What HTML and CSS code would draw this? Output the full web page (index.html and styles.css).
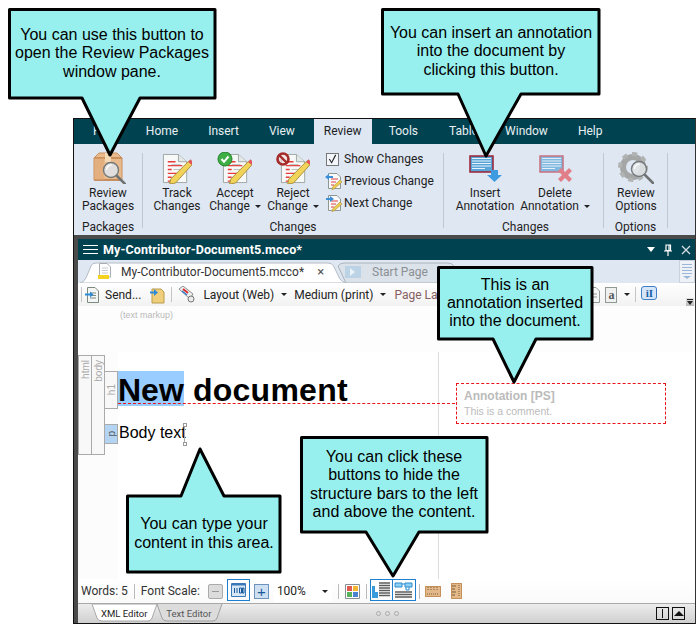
FILE: index.html
```html
<!DOCTYPE html>
<html lang="en">
<head>
<meta charset="utf-8">
<title>Review ribbon annotations</title>
<link rel="stylesheet" href="styles.css">
</head>
<body>
<svg width="0" height="0" class="defs">
  <defs>
    <symbol id="doc" viewBox="0 0 32 32">
      <path d="M2.500 1.500H18L26.500 9V30.500H2.500Z" fill="#f7f8f8" stroke="#9fa7a4"/>
      <path d="M18 1.500V9H26.500" fill="#e3e7e6" stroke="#9fa7a4"/>
      <path d="M7 9h8M7 13h15M7 17h4M7 21h12M7 25h4M7 29h6" stroke="#ea3a3a" stroke-width="1.400"/>
      <path d="M11 12h9M13 17h9M11 25h6" stroke="#b9c0bd" stroke-width="1"/>
      <path d="M29 8L33 11L15 31L9 32L10 27Z" fill="#f2d35a" stroke="#a88f3c" stroke-width="1"/>
      <path d="M28 9.500L32 12.500L33.500 9.500L30.500 6.500Z" fill="#e0555a"/>
    </symbol>
    <symbol id="smalldoc" viewBox="0 0 18 18">
      <path d="M3.500 1.500H12L15.500 5V16.500H3.500Z" fill="#f8f9fa" stroke="#8e9794"/>
      <path d="M6 7h7M6 10h5M6 13h3" stroke="#e04040"/>
      <path d="M15 8L17 10L9 17L7 17.500L7.500 15Z" fill="#eecb52" stroke="#a88f3c" stroke-width=".6"/>
    </symbol>
    <symbol id="annot" viewBox="0 0 30 26">
      <path d="M2 3h23v16H2Z" fill="#5aa5d8" stroke="currentColor" stroke-width="1.500"/>
      <path d="M4 5.500h19M4 8h19M4 10.500h19M4 13h19M4 15.500h13" stroke="#e6f2fb"/>
    </symbol>
    <symbol id="lens" viewBox="0 0 24 24">
      <path d="M14 14L23 23" stroke="#6f7272" stroke-width="2.500" stroke-linecap="round"/>
      <circle cx="9" cy="9" r="7.500" fill="#dfe3e6" fill-opacity=".9" stroke="#73787a" stroke-width="1.400"/>
      <path d="M4.500 9a5 5 0 0 1 5-5" stroke="#fff" fill="none" stroke-width="1.400"/>
    </symbol>
  </defs>
</svg>

<div class="window">
  <nav class="menubar">
    <span class="menu m-file">File</span>
    <span class="menu">Home</span>
    <span class="menu">Insert</span>
    <span class="menu">View</span>
    <span class="menu active">Review</span>
    <span class="menu">Tools</span>
    <span class="menu m-table">Table</span>
    <span class="menu">Window</span>
    <span class="menu">Help</span>
  </nav>

  <section class="ribbon">
    <div class="group g-packages">
      <div class="group-items">
        <div class="rbtn w-pack">
          <svg class="ico" width="36" height="32" viewBox="0 0 36 32">
            <path d="M4 6L9 1H27L32 6V28H4Z" fill="#e9bb8c" stroke="#c98f5d"/>
            <path d="M4 6H32M4 28H32" stroke="#c0824f" stroke-width="1.500"/>
            <path d="M15 1H21V10H15Z" fill="#f6d9b5"/>
            <path d="M4 6V28H14V6Z" fill="#dfa673" fill-opacity=".55"/>
            <use href="#lens" x="12" y="9" width="24" height="24"/>
          </svg>
          <span class="rlabel">Review<br>Packages</span>
        </div>
      </div>
      <div class="gtitle">Packages</div>
    </div>

    <div class="group g-changes">
      <div class="group-items">
        <div class="rbtn w-track">
          <svg class="ico" width="36" height="32"><use href="#doc" x="2" y="1" width="31" height="31"/></svg>
          <span class="rlabel">Track<br>Changes</span>
        </div>
        <div class="rbtn w-accept">
          <svg class="ico" width="36" height="32">
            <use href="#doc" x="4" y="1" width="31" height="31"/>
            <circle cx="8" cy="7" r="7" fill="#3fae45" stroke="#1f7f2a"/>
            <path d="M4.500 7L7 9.800L11.500 4.500" fill="none" stroke="#fff" stroke-width="2"/>
          </svg>
          <span class="rlabel">Accept<br>Change <i class="caret"></i></span>
        </div>
        <div class="rbtn w-reject">
          <svg class="ico" width="36" height="32">
            <use href="#doc" x="4" y="1" width="31" height="31"/>
            <circle cx="8" cy="7" r="5.500" fill="#f3d7d7" fill-opacity=".6" stroke="#a52a2a" stroke-width="2.600"/>
            <path d="M4 3L12 11" stroke="#a52a2a" stroke-width="2.400"/>
          </svg>
          <span class="rlabel">Reject<br>Change <i class="caret"></i></span>
        </div>
        <ul class="checklist">
          <li><span class="checkbox"><svg width="12" height="12" viewBox="0 0 12 12"><path d="M2.500 6L5 10L9.500 1.500" fill="none" stroke="#222" stroke-width="1.200"/></svg></span>Show Changes</li>
          <li><svg class="mini" width="18" height="18"><use href="#smalldoc" width="18" height="18"/><path d="M0 5L4 2V4H8V6H4V8Z" fill="#3a8fd8"/></svg>Previous Change</li>
          <li><svg class="mini" width="18" height="18"><use href="#smalldoc" width="18" height="18"/><path d="M9 5L5 2V4H1V6H5V8Z" fill="#3a8fd8"/></svg>Next Change</li>
        </ul>
      </div>
      <div class="gtitle">Changes</div>
    </div>

    <div class="group g-annot">
      <div class="group-items">
        <div class="rbtn w-insert">
          <svg class="ico" width="36" height="32" viewBox="0 0 36 32">
            <use href="#annot" class="c-dark" x="1" y="1" width="30" height="26"/>
            <path d="M24 18H31V23H35L27.500 30L20 23H24Z" fill="#3f9be0"/>
          </svg>
          <span class="rlabel">Insert<br>Annotation</span>
        </div>
        <div class="rbtn w-delete">
          <svg class="ico" width="36" height="32" viewBox="0 0 36 32">
            <use href="#annot" class="c-light" x="1" y="1" width="30" height="26" opacity=".7"/>
            <path d="M21 19L24 16L28 20L32 16L35 19L31 23L35 27L32 30L28 26L24 30L21 27L25 23Z" fill="#e07f88"/>
          </svg>
          <span class="rlabel">Delete<br>Annotation <i class="caret"></i></span>
        </div>
      </div>
      <div class="gtitle">Changes</div>
    </div>

    <div class="group g-options">
      <div class="group-items">
        <div class="rbtn w-opt">
          <svg class="ico" width="36" height="32" viewBox="0 0 36 32">
            <circle cx="15" cy="15" r="10" fill="none" stroke="#a4a7a6" stroke-width="6"/>
            <circle cx="15" cy="15" r="13" fill="none" stroke="#b0b3b2" stroke-width="4" stroke-dasharray="5 5"/>
            <use href="#lens" x="12" y="8" width="24" height="24"/>
          </svg>
          <span class="rlabel">Review<br>Options</span>
        </div>
      </div>
      <div class="gtitle">Options</div>
    </div>
  </section>

  <div class="dock">
    <section class="pane">
      <header class="titlebar">
        <span class="burger"><i></i><i></i><i></i></span>
        <strong class="doctitle">My-Contributor-Document5.mcco*</strong>
        <span class="winbtns">
          <i class="tri-down"></i>
          <svg width="10" height="12" viewBox="0 0 10 12"><path d="M3 1H7.500V6.500H3ZM1 7H9M5 7V12M6 1V6.500" fill="none" stroke="#fff" stroke-width="1.200"/></svg>
          <svg width="10" height="10" viewBox="0 0 10 10"><path d="M1 1L9 9M9 1L1 9" stroke="#d5dde2" stroke-width="1.300"/></svg>
        </span>
      </header>

      <div class="tabstrip">
        <svg class="tabshapes" width="617" height="23" viewBox="0 0 617 23">
          <path class="t-back" d="M260 6Q262 3 266 3H370Q374 3 376 6L384 23H268Z"/>
          <path class="t-front" d="M2 23Q6 22 8 18L13 6Q14 3 18 3H250Q254 3 255.500 6L262 19Q264 22 268 23Z"/>
        </svg>
        <div class="doctab">
          <svg width="14" height="17" viewBox="0 0 14 17"><path d="M1.500 .5H9L12.500 4V14H1.500Z" fill="#fff" stroke="#a9aeb0"/><path d="M4 5h6M4 7.500h6M4 10h6" stroke="#c6cacc"/><path d="M0 12H11V16H0Z" fill="#f4d21f"/></svg>
          <span class="doctab-name">My-Contributor-Document5.mcco*</span>
          <span class="doctab-x">×</span>
        </div>
        <div class="starttab">
          <svg width="16" height="12" viewBox="0 0 16 12"><path d="M0 0H16V12H0Z" fill="#bcd3e6"/><path d="M5 2L10 6L5 10Z" fill="#eaf3fa"/></svg>
          <span>Start Page</span>
        </div>
        <div class="tabscroll"><i></i><i></i><i></i><i></i><b></b></div>
      </div>

      <div class="toolbar">
        <span class="tsep"></span>
        <svg class="tico" width="15" height="16" viewBox="0 0 15 16"><path d="M2.500 .5H10L13.500 4V15.500H2.500Z" fill="#f3f6f4" stroke="#7d8a80"/><path d="M5 6h6M5 8.500h6M5 11h6" stroke="#7d8a80"/><path d="M0 6.500H5V4.500L8.500 7.500L5 10.500V8.500H0Z" fill="#2e8bd8"/></svg>
        <span class="titem send">Send...</span>
        <svg class="tico folder" width="16" height="18" viewBox="0 0 16 18"><path d="M3 3H12L15 6V17H3Z" fill="#f0cf7c" stroke="#b99b4a"/><path d="M1 5.500H5V3L9 6.500L5 10V7.500H1Z" fill="#2e8bd8"/></svg>
        <span class="tsep"></span>
        <svg class="tico mark" width="17" height="17" viewBox="0 0 17 17"><path d="M1 3L5 0L15 8L12 13Z" fill="#eef0f0" stroke="#8c8f90"/><path d="M5 3L10 7" stroke="#d83030" stroke-width="2"/><path d="M4 5L9 9" stroke="#2e7fd0" stroke-width="1.500"/><circle cx="13" cy="13" r="3" fill="#e9ebec" stroke="#777"/></svg>
        <span class="titem layout">Layout (Web)</span><i class="caret tcaret"></i>
        <span class="titem medium">Medium (print)</span><i class="caret tcaret"></i>
        <span class="titem pagelayout">Page Layout</span>
        <svg class="tico t-doc" width="10" height="16" viewBox="0 0 10 16"><path d="M0 .5H6L9.500 4V15.500H0Z" fill="#f5f7f6" stroke="#8f9a94"/><path d="M2 7h5M2 10h5" stroke="#8f9a94"/></svg>
        <span class="aicon">a</span>
        <i class="caret tcaret a-caret"></i>
        <span class="tsep"></span>
        <span class="infoicon">iI</span>
        <span class="tbscroll"></span>
      </div>

      <main class="docarea">
        <div class="doc-head">(text markup)</div>
        <div class="doc-body">
          <div class="editor">
            <div class="bar bar-html"><span>html</span></div>
            <div class="bar bar-body"><span>body</span></div>
            <div class="bar bar-h1"><span>h1</span></div>
            <div class="bar bar-p"><span>p</span></div>
            <div class="content">
              <h1 class="heading"><span class="hl">New</span> document</h1>
              <p class="para">Body text</p>
              <i class="handle-line"></i>
              <i class="handle h-top"></i>
              <i class="handle h-bot"></i>
            </div>
            <div class="anchor-line"></div>
          </div>
          <aside class="margin">
            <div class="annotation">
              <b>Annotation [PS]</b>
              <span>This is a comment.</span>
            </div>
          </aside>
        </div>
      </main>

      <footer class="statusbar">
        <span class="st-text">Words: 5</span>
        <span class="ssep"></span>
        <span class="st-text">Font Scale:</span>
        <span class="sbtn minus"><i></i></span>
        <span class="sbtn scale"><svg width="15" height="14" viewBox="0 0 15 14"><path d="M.5 .5H14.500V13.500H.5Z" fill="#d8e7f6" stroke="#3a79b8"/><path d="M1 1.500H14" stroke="#3a79b8" stroke-width="2"/><path d="M3.500 5V10M6 5V10M8.500 5H10.500V10H8.500ZM11.500 5H13V10H11.500Z" fill="none" stroke="#17589a"/></svg></span>
        <span class="sbtn plus">+</span>
        <span class="zoomval">100%<i class="caret"></i></span>
        <span class="ssep"></span>
        <svg class="colors" width="15" height="15" viewBox="0 0 15 15"><path d="M.5 .5H14.500V14.500H.5Z" fill="#fff" stroke="#8a8f92"/><path d="M2 2H7V7H2Z" fill="#e05a4e"/><path d="M8 2H13V7H8Z" fill="#f2b632"/><path d="M2 8H7V13H2Z" fill="#56b35a"/><path d="M8 8H13V13H8Z" fill="#4a83d0"/></svg>
        <span class="ssep"></span>
        <span class="selbtn">
          <svg width="19" height="17" viewBox="0 0 19 17"><path d="M0 4H3V16H0Z" fill="#3a9bdc"/><path d="M3 10H6V16H3Z" fill="#3a9bdc"/><path d="M7 1H18M7 3.500H18M7 6H18M7 8.500H18M7 11H18M7 13.500H18" stroke="#5c5c5c" stroke-width="1.500"/></svg>
        </span>
        <span class="selbtn second">
          <svg width="19" height="17" viewBox="0 0 19 17"><path d="M1 1H8V5H1ZM11 1H18V5H11Z" fill="#8fd0f2" stroke="#2c8ed0"/><path d="M8 2H11M12 5V8H15V5" fill="none" stroke="#2c8ed0"/><path d="M1 10H18M1 12.500H18M1 15H18" stroke="#5c5c5c" stroke-width="1.500"/></svg>
        </span>
        <span class="ssep"></span>
        <svg class="ruler-h" width="16" height="11" viewBox="0 0 16 11"><path d="M0 0H16V11H0Z" fill="#e3b98a"/><path d="M.5 .5H15.500V10.500H.5Z" fill="none" stroke="#c48f58"/><path d="M3 1V5M6 1V4M9 1V5M12 1V4M2 8H14" stroke="#7a5a38" stroke-dasharray="1 1"/></svg>
        <svg class="ruler-v" width="11" height="16" viewBox="0 0 11 16"><path d="M0 0H11V16H0Z" fill="#e3b98a"/><path d="M.5 .5H10.500V15.500H.5Z" fill="none" stroke="#c48f58"/><path d="M1 3H5M1 6H4M1 9H5M1 12H4" stroke="#7a5a38"/><path d="M8 2V14" stroke="#7a5a38" stroke-dasharray="1 1"/></svg>
      </footer>

      <div class="bottomtabs">
        <svg class="btabshapes" width="150" height="19" viewBox="0 0 150 19">
          <path class="bt-back" d="M79 0L84 14Q85 17 89 17H135Q138 17 139 14L144 0"/>
          <path class="bt-front" d="M14 0L19 14Q20 17 24 17H70Q73 17 74 14L79 0Z"/>
        </svg>
        <span class="btab on">XML Editor</span>
        <span class="btab off">Text Editor</span>
        <span class="dots"><i></i><i></i><i></i></span>
        <span class="bbtn"><i class="vline"></i></span>
        <span class="bbtn"><i class="tri-up"></i></span>
      </div>
    </section>
  </div>
</div>

<svg class="balloons" width="696" height="624" viewBox="0 0 696 624">
  <path d="M9.500 9.500H215V98H140L110 155L82 98H9.500Z"/>
  <path d="M382.500 9.500H599V94H521L486 156L458 94H382.500Z"/>
  <path d="M438.500 267.500H592V339H536L514 382L493 339H438.500Z"/>
  <path d="M127.500 496H181L200 449L224 496H280V572H127.500Z"/>
  <path d="M301.500 437.500H487V532H419L393 576L366 532H301.500Z"/>
</svg>
<p class="note n1"><span>You can use this button to<br>open the Review Packages<br>window pane.</span></p>
<p class="note n2"><span>You can insert an annotation<br>into the document by<br>clicking this button.</span></p>
<p class="note n3"><span>This is an<br>annotation inserted<br>into the document.</span></p>
<p class="note n4"><span>You can type your<br>content in this area.</span></p>
<p class="note n5"><span>You can click these<br>buttons to hide the<br>structure bars to the left<br>and above the content.</span></p>
</body>
</html>
```

FILE: styles.css
```css
* { box-sizing: border-box; }
html, body { margin: 0; padding: 0; }
body {
  width: 696px;
  height: 624px;
  overflow: hidden;
  position: relative;
  background: #fff;
  font-family: Roboto, "Noto Sans", sans-serif;
  font-size: 12px;
  color: #1e1e1e;
}
i { font-style: normal; display: block; }
.defs { position: absolute; }
.c-dark { color: #9a2233; }
.c-light { color: #c2404e; }

.window {
  margin: 118px 0 0 73px;
  width: 623px;
  height: 506px;
  border: 1px solid #111;
  border-right-color: #333;
  display: flex;
  flex-direction: column;
}

/* menu */
.menubar {
  height: 25px;
  background: #004250;
  display: flex;
  padding-left: 4px;
  flex: none;
}
.menu {
  color: #e8f0f2;
  line-height: 25px;
  padding: 0 15px;
}
.m-file { padding-right: 19px; }
.menu.active { background: #dfe7f3; color: #1e1e1e; padding: 0 10px; margin: 0 2px 0 4px; }
.m-table { margin: 0 -3px 0 1px; }

/* ribbon */
.ribbon {
  height: 91px;
  background: #dfe7f3;
  display: flex;
  flex: none;
  padding-top: 9px;
}
.group {
  border-right: 1px solid #bcc8d2;
  height: 75px;
  display: flex;
  flex-direction: column;
  flex: none;
}
.g-packages { width: 69px; }
.g-changes { width: 301px; }
.g-annot { width: 160px; }
.g-options { width: 64px; }
.group-items { display: flex; height: 67px; flex: none; }
.gtitle { text-align: center; line-height: 14px; height: 14px; flex: none; }
.g-annot .gtitle { padding-left: 4px; }
.rbtn { display: flex; flex-direction: column; align-items: center; flex: none; }
.ico { height: 32px; display: block; margin: -1px 0 3px; }
.rlabel { text-align: center; line-height: 13px; white-space: nowrap; }
.caret {
  display: inline-block;
  width: 0; height: 0;
  border: 3px solid transparent;
  border-top: 3px solid #222;
  border-bottom: 0;
  vertical-align: 2px;
  margin-left: 2px;
}
.w-pack { width: 68px; }
.w-track { width: 58px; margin-left: 5px; }
.w-accept { width: 58px; }
.w-reject { width: 58px; }
.w-insert { width: 70px; margin-left: 6px; }
.w-delete { width: 70px; }
.w-opt { width: 64px; }
.checklist { list-style: none; margin: -5px 0 0 3px; padding: 0; }
.checklist li { height: 22px; display: flex; align-items: center; gap: 1px; white-space: nowrap; }
.checkbox {
  width: 13px; height: 13px; margin: 0 4px 0 1px;
  border: 1px solid #777; background: #f3f6fa;
  display: flex; align-items: center; justify-content: center;
}
.mini { flex: none; }

/* dock */
.dock {
  flex: 1;
  min-height: 0;
  background: #4b4b4b;
  padding: 4px 0 0 4px;
  display: flex;
}
.pane { flex: 1; display: flex; flex-direction: column; background: #fff; min-width: 0; }

.titlebar {
  height: 21px; flex: none;
  background: #004250;
  color: #fff;
  display: flex;
  align-items: center;
  padding-left: 5px;
}
.burger { width: 15px; display: flex; flex-direction: column; gap: 3px; }
.burger i { height: 1px; background: #fff; }
.doctitle { margin-left: 5px; font-size: 12.500px; letter-spacing: .1px; }
.winbtns { margin-left: auto; display: flex; align-items: center; gap: 8px; padding-right: 4px; }
.tri-down { width: 0; height: 0; border: 4px solid transparent; border-top: 5px solid #fff; border-bottom: 0; }

.tabstrip {
  height: 23px; flex: none;
  background: #dfe7f3;
  display: flex;
  align-items: center;
  position: relative;
}
.tabshapes { position: absolute; left: 0; top: 0; }
.t-front { fill: #fff; stroke: #b4bcc4; }
.t-back { fill: #dbe2ea; stroke: #aab2ba; }
.doctab { display: flex; align-items: center; padding-left: 20px; width: 260px; position: relative; }
.doctab-name { margin-left: 9px; color: #333; }
.doctab-x { margin-left: 13px; color: #555; font-size: 13px; }
.starttab {
  position: relative;
  display: flex; align-items: center; gap: 11px;
  padding-left: 7px;
  color: #8a8f94;
}
.tabscroll {
  margin-left: auto; width: 16px; height: 23px;
  background: #eef2f7; border: 1px solid #c8d2dc;
  display: flex; flex-direction: column; gap: 2px; align-items: center; padding-top: 3px;
  position: relative;
}
.tabscroll i { width: 10px; height: 1px; background: #9ab6d8; flex: none; }
.tabscroll b { width: 0; height: 0; border: 4px solid transparent; border-top: 3px solid #9ab6d8; border-bottom: 0; }

.toolbar {
  height: 23px; flex: none;
  background: linear-gradient(#fff, #f2f2f2);
  display: flex;
  align-items: center;
  position: relative;
  padding-left: 3px;
}
.tsep { width: 1px; height: 15px; background: #c5c5c5; flex: none; }
.tico { flex: none; margin-left: 3px; }
.titem { white-space: nowrap; color: #222; }
.send { margin-left: 5px; }
.folder { margin-left: 8px; margin-right: 6px; }
.mark { margin: 0 0 0 6px; }
.layout { margin-left: 8px; }
.tcaret { margin: 0 0 0 7px; vertical-align: 0; }
.medium { margin-left: 7px; }
.pagelayout { margin-left: 8px; color: #85605f; width: 196px; overflow: hidden; }
.t-doc { margin-left: 0; }
.aicon {
  width: 12px; height: 16px; margin-left: 5px;
  border: 1px solid #8f9a94; background: #eef1f0;
  font-family: "Liberation Serif", serif; font-weight: bold; font-size: 12px;
  line-height: 14px; text-align: center; color: #555;
}
.a-caret { margin-left: 7px; margin-right: 5px; }
.infoicon {
  margin-left: 5px; width: 16px; height: 14px;
  border: 1px solid #3f7fc8; border-radius: 3px;
  background: #d6e6f8; color: #1c5fa8;
  font: bold 11px/12px "Liberation Serif", serif; text-align: center;
  margin-top: -3px;
}
.tbscroll {
  position: absolute; right: 1px; bottom: 0; width: 8px; height: 8px;
  background: linear-gradient(#e4e4e4, #b8b8b8);
}
.tbscroll::before { content: ""; display: block; margin: 1px 1px 0; height: 1px; background: #222; }
.tbscroll::after {
  content: ""; display: block; width: 0; height: 0; margin: 1px 0 0 1px;
  border: 3px solid transparent; border-top: 4px solid #222; border-bottom: 0;
}

/* document */
.docarea { height: 273px; flex: none; display: flex; flex-direction: column; background: #fff; }
.doc-head {
  height: 46px; flex: none;
  background: #fdfdfd;
  padding: 4px 0 0 42px;
  font-size: 9px;
  color: #b9b9b9;
  font-family: "Liberation Sans", sans-serif;
}
.doc-body { flex: 1; min-height: 0; display: flex; }
.editor { width: 361px; flex: none; position: relative; background: linear-gradient(90deg, #fcfcfc 40px, #fff 40px); border-right: 1px solid #ddd; }
.bar {
  position: absolute;
  border: 1px solid #aaa;
  background: #f8f8f8;
  display: flex; align-items: flex-start; justify-content: center;
  color: #aaa;
  font-family: "Liberation Sans", sans-serif;
  font-size: 10px;
}
.bar span { writing-mode: vertical-rl; transform: rotate(180deg); padding-bottom: 4px; }
.bar-html { left: 0; top: 3px; width: 14px; height: 100px; }
.bar-body { left: 13px; top: 3px; width: 14px; height: 100px; }
.bar-h1 { left: 26px; top: 19px; width: 14px; height: 38px; }
.bar-p { left: 26px; top: 72px; width: 14px; height: 20px; background: #b3d5f3; color: #555; }
.bar-h1, .bar-p { align-items: center; }
.bar-h1 span, .bar-p span { padding-bottom: 0; }
.content { position: absolute; left: 40px; top: 19px; font-family: "Liberation Sans", sans-serif; }
.heading { margin: 0; height: 35px; font-size: 32px; line-height: 39px; font-weight: bold; color: #000; white-space: nowrap; letter-spacing: .25px; }
.hl { background: #99ccff; display: inline-block; height: 35px; letter-spacing: 0; }
.para { margin: 17px 0 0 1px; font-size: 16px; line-height: 20px; color: #000; }
.handle { position: absolute; width: 4px; height: 4px; border: 1px solid #999; background: #fff; left: 65px; }
.handle-line { position: absolute; left: 66px; top: 53px; width: 1px; height: 20px; background: #aaa; }
.h-top { top: 52px; }
.h-bot { top: 71px; }
.anchor-line { position: absolute; left: 40px; right: -17px; top: 51px; border-top: 1px dashed #e8141c; }
.margin { flex: 1; padding: 31px 0 0 17px; }
.annotation {
  width: 210px; height: 41px;
  border: 1px dashed #e8141c;
  padding: 5px 7px 0;
  font-family: "Liberation Sans", sans-serif;
  color: #bbb;
  background: #fff;
  position: relative;
  display: flex; flex-direction: column;
}
.annotation b { font-size: 12px; line-height: 15px; }
.annotation span { font-size: 10.500px; line-height: 15px; }

/* status */
.statusbar {
  height: 24px; flex: none;
  background: linear-gradient(#fff, #fafafa);
  display: flex; align-items: center;
  padding-left: 3px;
}
.st-text { white-space: nowrap; color: #333; }
.ssep { width: 1px; height: 15px; background: #bbb; margin: 0 6px; flex: none; }
.sbtn { width: 15px; height: 15px; flex: none; display: flex; align-items: center; justify-content: center; }
.minus { margin-left: 8px; border: 1px solid #aaa; background: #dcdcdc; border-radius: 2px; }
.minus i { width: 7px; height: 1px; background: #999; }
.scale { margin-left: 4px; width: 23px; height: 22px; border: 1px solid #1d7fd0; align-self: flex-start; }
.plus { margin-left: 4px; border: 1px solid #6b93bd; background: #cfe0f2; color: #1b5a9a; font: 15px/13px "Liberation Sans", sans-serif; }
.zoomval { margin-left: 5px; width: 58px; height: 22px; line-height: 22px; background: #fff; padding: 0 4px 0 3px; display: flex; align-items: center; justify-content: space-between; }
.colors { flex: none; }
.selbtn { width: 23px; height: 22px; flex: none; border: 1px solid #1d7fd0; display: flex; align-items: center; justify-content: center; margin-left: -3px; align-self: flex-start; }
.selbtn.second { margin: 0 -3px 0 -1px; width: 24px; }
.ruler-h { flex: none; margin-left: -1px; }
.ruler-v { flex: none; margin-left: 10px; }

.bottomtabs {
  height: 20px; flex: none;
  border-top: 1px solid #a8a8a8;
  background: linear-gradient(#ededed, #cfcfcf);
  display: flex; align-items: center;
  font-size: 9.500px;
  position: relative;
}
.btabshapes { position: absolute; left: 0; top: 0; }
.bt-front { fill: #fff; stroke: #a8a8a8; }
.bt-back { fill: #dcdcdc; stroke: #a0a0a0; }
.btab { position: relative; white-space: nowrap; }
.btab.on { margin-left: 23px; color: #222; }
.btab.off { margin-left: 19px; color: #555; }
.dots { display: flex; gap: 4px; margin-left: 165px; }
.dots i { width: 5px; height: 5px; border: 1px solid #aaa; border-radius: 50%; }
.bbtn { width: 13px; height: 13px; border: 1px solid #111; display: flex; align-items: center; justify-content: center; flex: none; }
.dots + .bbtn { margin-left: 257px; }
.bbtn + .bbtn { margin-left: 3px; }
.vline { width: 1px; height: 9px; background: #111; }
.tri-up { width: 0; height: 0; border: 5px solid transparent; border-bottom: 5px solid #111; border-top: 0; }

/* callouts */
.balloons { position: absolute; left: 0; top: 0; pointer-events: none; }
.balloons path { fill: #98f0ee; stroke: #000; stroke-width: 3; stroke-linejoin: round; }
.note {
  position: absolute;
  margin: 0;
  display: flex;
  align-items: center;
  justify-content: center;
  text-align: center;
  font-family: "Liberation Sans", sans-serif;
  font-size: 16px;
  line-height: 18.300px;
  color: #000;
}
.n1 { left: 14px; top: 9px; width: 196px; height: 89px; }
.n2 { left: 386px; top: 9px; width: 210px; height: 85px; }
.n3 { left: 441px; top: 267px; width: 148px; height: 72px; }
.n4 { left: 131px; top: 496px; width: 146px; height: 75px; }
.n5 { left: 305px; top: 437px; width: 178px; height: 95px; }
```
